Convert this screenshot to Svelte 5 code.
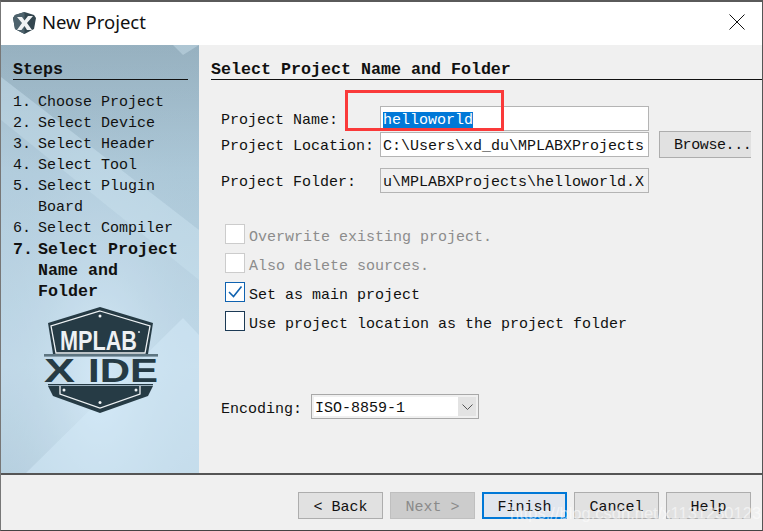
<script>
  const steps = [
    { n: '1.', t: ['Choose Project'] },
    { n: '2.', t: ['Select Device'] },
    { n: '3.', t: ['Select Header'] },
    { n: '4.', t: ['Select Tool'] },
    { n: '5.', t: ['Select Plugin', 'Board'] },
    { n: '6.', t: ['Select Compiler'] },
    { n: '7.', t: ['Select Project', 'Name and', 'Folder'], on: true }
  ];
  const buttons = [
    { l: '< Back' },
    { l: 'Next >', off: true },
    { l: 'Finish', main: true },
    { l: 'Cancel' },
    { l: 'Help' }
  ];
</script>

<div class="window">
  <header class="titlebar">
    <svg class="appicon" width="23" height="22" viewBox="0 0 23 22">
      <path d="M11.5 0 L21 3 L23 6 L21 17 L11.5 22 L2 17 L0 6 L2 3 Z" fill="#33464f" />
      <path d="M2 3 L11.5 0 L11.5 22 L2 17 L0 6 Z" fill="#4d626c" />
      <path d="M4 5 L9 5 L11.5 8.5 L15 4 L20 4 L14 11 L19 18 L14 18 L11.5 14 L8.5 18 L4 18 L9 11 Z" fill="#f1f3f4" />
    </svg>
    <span class="title">New Project</span>
    <svg class="close" width="16" height="16" viewBox="0 0 16 16">
      <path d="M.5 .5 L15.5 15.5 M15.5 .5 L.5 15.5" stroke="#111" stroke-width="1" fill="none" />
    </svg>
  </header>

  <div class="body">
    <aside class="side">
      <svg class="sidebg" width="198" height="428" viewBox="0 0 198 428" preserveAspectRatio="none">
        <defs>
          <linearGradient id="base" x1="0" y1="0" x2="0" y2="1">
            <stop offset="0" stop-color="#93adbc" />
            <stop offset="0.3" stop-color="#aecada" />
            <stop offset="0.75" stop-color="#c4ddec" />
            <stop offset="1" stop-color="#b5cfde" />
          </linearGradient>
          <radialGradient id="glow" cx="0.5" cy="0.78" r="0.62">
            <stop offset="0" stop-color="#d8ecf9" stop-opacity="0.9" />
            <stop offset="1" stop-color="#a5bfcf" stop-opacity="0.2" />
          </radialGradient>
        </defs>
        <rect width="198" height="428" fill="url(#base)" />
        <rect width="198" height="428" fill="url(#glow)" />
        <polygon points="0,32 198,185 198,235 0,75" fill="#d2e8f5" opacity="0.4" />
        <polygon points="0,75 198,235 198,428 0,428" fill="#cde5f3" opacity="0.18" />
        <polygon points="172,0 198,0 182,10" fill="#c6dbe7" opacity="0.5" />
        <polygon points="182,273 198,290 198,428 25,428" fill="#d4eaf8" opacity="0.5" />
      </svg>
      <div class="sidecontent">
        <h2>Steps</h2>
        <ol>
          {#each steps as s}
            <li class:on={s.on}>
              <span class="num">{s.n}</span>
              <span class="txt">{#each s.t as line}<span class="ln">{line}</span>{/each}</span>
            </li>
          {/each}
        </ol>
        <svg class="logo" width="114" height="107" viewBox="0 0 114 107">
          <path d="M56 0 L109 16 L104 47 L9 47 L4 16 Z" fill="#263b45" />
          <path d="M56 4 L106 19 L101 46 L12 46 L7 19 Z" fill="none" stroke="#eef2f4" stroke-width="1.3" />
          <rect x="0" y="47" width="114" height="2.6" fill="#5d7581" />
          <circle cx="56" cy="9" r="1.5" fill="#eef2f4" />
          <circle cx="95" cy="25" r="1.1" fill="#cfd6da" />
          <text class="mplab" x="16" y="43" textLength="77" lengthAdjust="spacingAndGlyphs">MPLAB</text>
          <text class="xide" x="0" y="75" textLength="31" lengthAdjust="spacingAndGlyphs">X</text>
          <text class="xide" x="44" y="75" textLength="70" lengthAdjust="spacingAndGlyphs">IDE</text>
          <rect x="4" y="77" width="105" height="1.3" fill="#263b45" />
          <path d="M4 79 L109 79 L104 89 L56 106 L9 89 Z" fill="#263b45" />
          <path d="M16 79 L16 87 L56 101 L96 87 L96 79" fill="none" stroke="#eef2f4" stroke-width="1.3" />
          <circle cx="20" cy="83" r="1.5" fill="#eef2f4" />
          <circle cx="92" cy="83" r="1.5" fill="#eef2f4" />
          <circle cx="56" cy="95.5" r="1.5" fill="#eef2f4" />
        </svg>
      </div>
    </aside>

    <main class="panel">
      <h1>Select Project Name and Folder</h1>

      <div class="fields">
        <span class="lab">Project Name:</span>
        <div class="input sel"><mark>helloworld</mark></div>
        <span class="gap"></span>
        <span class="lab">Project Location:</span>
        <div class="input">C:\Users\xd_du\MPLABXProjects</div>
        <button class="btn browse">Browse...</button>
        <span class="lab folder">Project Folder:</span>
        <div class="input folder ro">u\MPLABXProjects\helloworld.X</div>
      </div>

      <div class="checks">
        <div class="chk off"><span class="box"></span><span class="cl">Overwrite existing project.</span></div>
        <div class="chk off"><span class="box"></span><span class="cl">Also delete sources.</span></div>
        <div class="chk"><span class="box blue">
          <svg width="18" height="18" viewBox="0 0 18 18"><path d="M3 9 L7.5 13.5 L15.5 3.5" fill="none" stroke="#0f62b0" stroke-width="1.6" /></svg>
        </span><span class="cl">Set as main project</span></div>
        <div class="chk"><span class="box dark"></span><span class="cl">Use project location as the project folder</span></div>
      </div>

      <div class="enc">
        <span class="cl">Encoding:</span>
        <div class="select">
          <span class="val">ISO-8859-1</span>
          <span class="arrow"><svg width="11" height="6" viewBox="0 0 11 6"><path d="M.5 .5 L5.5 5.5 L10.5 .5" fill="none" stroke="#555" /></svg></span>
        </div>
      </div>
    </main>
  </div>

  <footer class="foot">
    {#each buttons as b}
      <button class="btn act" class:dis={b.off} class:main={b.main}>{b.l}</button>
    {/each}
  </footer>

  <div class="redbox"></div>
  <div class="mark">https://blog.csdn.net/x1131230123</div>
</div>

<style>
  :global(body) { margin: 0; background: #fff; }
  .window {
    position: relative;
    width: 763px;
    height: 531px;
    box-sizing: border-box;
    overflow: hidden;
    display: flex;
    flex-direction: column;
    border-top: 2px solid #5a5a5a;
    border-left: 1px solid #777;
    border-right: 1px solid #555;
    border-bottom: 1px solid #444;
    font-family: "Liberation Mono", monospace;
    font-size: 15px;
    color: #111;
    background: #f0f0f0;
  }
  .titlebar {
    height: 43px;
    flex: none;
    background: #fff;
    display: flex;
    align-items: center;
    padding: 0 17px 0 12px;
  }
  .appicon { margin-right: 6px; margin-top: -2px; }
  .title {
    font-family: "Noto Sans", sans-serif;
    font-size: 18.5px;
    color: #111;
    flex: 1;
    margin: -4px 0 0 0;
  }
  .close { margin-top: -3px; }
  .body { flex: 1; display: flex; min-height: 0; }
  .side {
    position: relative;
    width: 198px;
    flex: none;
    overflow: hidden;
  }
  .sidebg { position: absolute; inset: 0; }
  .sidecontent { position: relative; padding: 16px 11px 0 12px; }
  h2 {
    margin: 0;
    font: bold 16.67px/18px "Liberation Mono", monospace;
    border-bottom: 1px solid #111;
    height: 18px;
  }
  ol { list-style: none; margin: 12px 0 0; padding: 0; }
  li { display: flex; line-height: 21px; }
  .num { width: 25px; flex: none; }
  .txt { display: flex; flex-direction: column; }
  .ln { white-space: nowrap; }
  li.on { font-weight: bold; font-size: 16.67px; }
  .logo { display: block; margin: 5px 0 0 31px; }
  .mplab {
    font: bold 27px "Liberation Sans", sans-serif;
    fill: #eef1f3;
  }
  .xide {
    font: bold 33px "Liberation Sans", sans-serif;
    fill: #263b45;
  }
  .panel { flex: 1; padding: 16px 0 0 12px; min-width: 0; position: relative; }
  h1 {
    margin: 0;
    font: bold 16.67px/18px "Liberation Mono", monospace;
    border-bottom: 1px solid #111;
    height: 18px;
  }
  .fields {
    display: grid;
    grid-template-columns: 159px 269px 92px;
    margin: 26px 0 0 10px;
    align-items: center;
  }
  .lab { white-space: nowrap; padding-top: 3px; }
  .input {
    height: 25px;
    box-sizing: border-box;
    border: 1px solid #b4b4b4;
    background: #fff;
    line-height: 27px;
    padding: 0 2px;
    white-space: nowrap;
    overflow: hidden;
    grid-column: 2;
  }
  .sel { margin-bottom: 1px; }
  .gap { grid-column: 3; }
  .input.ro { background: #f0f0f0; }
  mark { background: #0078d7; color: #fff; }
  .folder { margin-top: 11px; }
  .btn {
    font: inherit;
    color: #111;
    background: #e1e1e1;
    border: 1px solid #adadad;
    border-radius: 0;
    padding: 0;
    box-sizing: border-box;
  }
  .browse {
    margin: -1px 0 -1px 10px;
    width: 92px;
    height: 27px;
    text-align: left;
    padding: 2px 0 0 14px;
    border-right: none;
    white-space: nowrap;
    overflow: hidden;
    letter-spacing: -0.4px;
  }
  .checks { margin: 31px 0 0 14px; display: flex; flex-direction: column; gap: 9px; }
  .chk { display: flex; align-items: center; height: 20px; gap: 4px; white-space: nowrap; }
  .cl { padding-top: 6px; }
  .box {
    width: 20px;
    height: 20px;
    box-sizing: border-box;
    border: 1px solid #333;
    background: #fff;
    display: flex;
    align-items: center;
    justify-content: center;
  }
  .chk.off { color: #8c8c8c; }
  .chk.off .box { border-color: #cccccc; }
  .box.blue { border-color: #0f62b0; }
  .box.dark { border-color: #1c3a55; }
  .enc { margin: 63px 0 0 10px; display: flex; align-items: center; gap: 9px; height: 25px; }
  .select {
    width: 168px;
    height: 25px;
    box-sizing: border-box;
    border: 1px solid #a8a8a8;
    background: #f0f0f0;
    padding: 2px;
    display: flex;
  }
  .val { flex: 1; background: #fff; line-height: 23px; height: 19px; overflow: hidden; padding-left: 1px; }
  .arrow { width: 18px; background: #e3e3e3; display: flex; align-items: center; justify-content: center; }
  .foot {
    flex: none;
    height: 57px;
    box-sizing: border-box;
    border-top: 2px solid #555;
    background: #f0f0f0;
    display: flex;
    gap: 7px;
    padding: 17px 0 0 297px;
  }
  .act { width: 85px; height: 27px; padding-top: 3px; }
  .act.dis { background: #cccccc; color: #8a8a8a; border-color: #bfbfbf; }
  .act.main { border: 2px solid #0078d7; background: #e1e6ee; }
  .redbox {
    position: absolute;
    left: 344px;
    top: 88px;
    width: 159px;
    height: 41px;
    box-sizing: border-box;
    border: 3px solid #fa3a3a;
    pointer-events: none;
  }
  .mark {
    position: absolute;
    left: 509px;
    top: 502px;
    font: 16.5px "Liberation Sans", sans-serif;
    color: rgba(255, 255, 255, 0.55);
    white-space: nowrap;
  }
</style>
